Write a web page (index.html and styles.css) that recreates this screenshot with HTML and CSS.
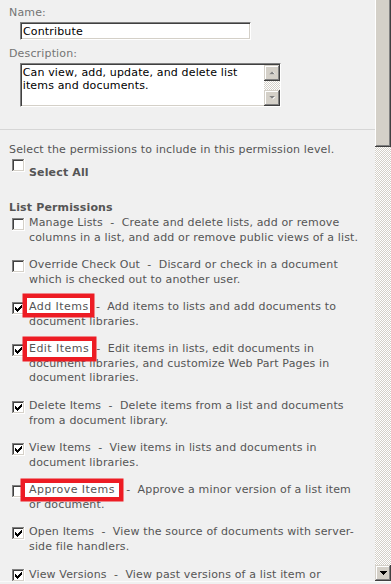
FILE: index.html
```html
<!DOCTYPE html>
<html lang="en">
<head>
<meta charset="utf-8">
<title>Permission Level</title>
<link rel="stylesheet" href="styles.css">
</head>
<body>
<svg class="defs" width="0" height="0" aria-hidden="true">
  <defs>
    <g id="cb-box">
      <path fill="#808080" d="M0 0h12v1H1v11H0z"/>
      <path fill="#ffffff" d="M12 0h1v13H0v-1h12z"/>
      <path fill="#404040" d="M1 1h10v1H2v9H1z"/>
      <path fill="#d4d0c8" d="M11 1h1v11H1v-1h10z"/>
      <rect x="2" y="2" width="9" height="9" fill="#ffffff"/>
    </g>
    <path id="cb-check" fill="#000" d="M9 3h1v1H9z M8 4h2v1H8z M3 5h1v1H3z M7 5h3v1H7z M3 6h2v1H3z M6 6h3v1H6z M3 7h5v1H3z M4 8h3v1H4z M5 9h1v1H5z"/>
  </defs>
</svg>

<div class="frame">
  <main class="content">
    <section class="top">
      <div class="label">Name:</div>
      <input class="field" type="text" value="Contribute">
      <div class="label label-desc">Description:</div>
      <div class="memo">
        <div class="memo-text">Can view, add, update, and delete list items and documents.</div>
        <div class="memo-scroll">
          <div class="sbtn"><svg class="arrow" width="7" height="4" viewBox="0 0 8 5"><path fill="#fff" d="M1 4h7L4.5 0.5z"/><path fill="#808080" d="M0 4h7L3.5 0.5z"/></svg></div>
          <div class="strack"></div>
          <div class="sbtn"><svg class="arrow" width="7" height="4" viewBox="0 0 8 5"><path fill="#fff" d="M1 1h7L4.5 4.5z"/><path fill="#808080" d="M0 0h7L3.5 3.5z"/></svg></div>
        </div>
      </div>
    </section>

    <section class="perms">
      <p class="intro">Select the permissions to include in this permission level.</p>
      <div class="selectall">
        <svg class="cb" viewBox="0 0 13 13"><use href="#cb-box"/></svg>
        <span class="selectall-text">Select All</span>
      </div>
      <h3 class="group-title">List Permissions</h3>
      <ul class="items">
        <li class="item">
          <svg class="cb" viewBox="0 0 13 13"><use href="#cb-box"/></svg>
          <span class="item-text">Manage Lists&nbsp;&nbsp;-&nbsp;&nbsp;Create and delete lists, add or remove columns in a list, and add or remove public views of a list.</span>
        </li>
        <li class="item">
          <svg class="cb" viewBox="0 0 13 13"><use href="#cb-box"/></svg>
          <span class="item-text">Override Check Out&nbsp;&nbsp;-&nbsp;&nbsp;Discard or check in a document which is checked out to another user.</span>
        </li>
        <li class="item">
          <svg class="cb" viewBox="0 0 13 13"><use href="#cb-box"/><use href="#cb-check"/></svg>
          <span class="item-text"><span class="mark mark-add">Add Items</span>&nbsp;&nbsp;-&nbsp;&nbsp;Add items to lists and add documents to document libraries.</span>
        </li>
        <li class="item">
          <svg class="cb" viewBox="0 0 13 13"><use href="#cb-box"/><use href="#cb-check"/></svg>
          <span class="item-text"><span class="mark mark-edit">Edit Items</span>&nbsp;&nbsp;-&nbsp;&nbsp;Edit items in lists, edit documents in document libraries, and customize Web Part Pages in document libraries.</span>
        </li>
        <li class="item">
          <svg class="cb" viewBox="0 0 13 13"><use href="#cb-box"/><use href="#cb-check"/></svg>
          <span class="item-text">Delete Items&nbsp;&nbsp;-&nbsp;&nbsp;Delete items from a list and documents from a document library.</span>
        </li>
        <li class="item">
          <svg class="cb" viewBox="0 0 13 13"><use href="#cb-box"/><use href="#cb-check"/></svg>
          <span class="item-text">View Items&nbsp;&nbsp;-&nbsp;&nbsp;View items in lists and documents in document libraries.</span>
        </li>
        <li class="item">
          <svg class="cb" viewBox="0 0 13 13"><use href="#cb-box"/></svg>
          <span class="item-text"><span class="mark mark-approve">Approve Items</span>&nbsp;&nbsp;-&nbsp;&nbsp;Approve a minor version of a list item or document.</span>
        </li>
        <li class="item">
          <svg class="cb" viewBox="0 0 13 13"><use href="#cb-box"/><use href="#cb-check"/></svg>
          <span class="item-text">Open Items&nbsp;&nbsp;-&nbsp;&nbsp;View the source of documents with server-side file handlers.</span>
        </li>
        <li class="item">
          <svg class="cb" viewBox="0 0 13 13"><use href="#cb-box"/><use href="#cb-check"/></svg>
          <span class="item-text">View Versions&nbsp;&nbsp;-&nbsp;&nbsp;View past versions of a list item or document.</span>
        </li>
      </ul>
    </section>
  </main>

  <div class="vscroll">
    <div class="thumb"></div>
    <div class="track"></div>
    <div class="sbtn sbtn-main"><svg class="arrow" width="7" height="4" viewBox="0 0 7 4"><path fill="#000" d="M0 0h7v1H6v1H5v1H4v1H3V3H2V2H1V1H0z"/></svg></div>
  </div>
</div>
</body>
</html>
```

FILE: styles.css
```css
* {
  box-sizing: border-box;
}

html, body {
  margin: 0;
  background: #f0f0f0;
}

body {
  font-family: "DejaVu Sans", Verdana, sans-serif;
  font-size: 11px;
  line-height: 14.5px;
  letter-spacing: 0.15px;
  color: #555555;
  overflow: hidden;
}

.defs {
  position: absolute;
  width: 0;
  height: 0;
}

.frame {
  display: flex;
  height: 582px;
  border-bottom: 1px solid #fafafa;
  box-shadow: 0 1px #9a9a9a;
  overflow: hidden;
}

.content {
  width: 375px;
  flex: none;
}

/* ---------- top: name / description ---------- */
.top {
  height: 130px;
  padding: 6px 9px 0;
  border-bottom: 1px solid #d6d6d6;
}

.label {
  color: #747474;
}

.label-desc {
  margin-top: 6.75px;
}

.field {
  display: block;
  margin: 1.5px 0 0 11px;
  width: 231px;
  height: 18px;
  padding: 0 0 0 2px;
  font: inherit;
  letter-spacing: inherit;
  color: #000;
  background: #fff;
  border: 1px solid;
  border-color: #808080 #ffffff #ffffff #808080;
  box-shadow: inset 1px 1px #404040, inset -1px -1px #d4d0c8;
  outline: none;
}

.memo {
  display: flex;
  margin: 1.75px 0 0 11px;
  width: 261px;
  height: 44px;
  background: #fff;
  border: 1px solid;
  border-color: #808080 #ffffff #ffffff #808080;
  box-shadow: inset 1px 1px #404040, inset -1px -1px #d4d0c8;
}

.memo-text {
  flex: 1;
  min-width: 0;
  padding: 2px 0 0 1.7px;
  color: #000;
  line-height: 13.3px;
}

.memo-scroll {
  width: 16px;
  flex: none;
  display: flex;
  flex-direction: column;
  margin-top: 1px;
}

.sbtn {
  width: 16px;
  height: 16px;
  flex: none;
  display: flex;
  align-items: center;
  justify-content: center;
  background: #d4d0c8;
  box-shadow: inset -1px -1px #404040, inset 1px 1px #d4d0c8,
              inset -2px -2px #808080, inset 2px 2px #ffffff;
}

.arrow {
  display: block;
}

.strack,
.track {
  flex: 1;
  background: repeating-conic-gradient(#d4d0c8 0 25%, #ffffff 0 50%) 0 0 / 2px 2px;
}

/* ---------- permissions ---------- */
.perms {
  padding: 12.75px 11px 0 9px;
}

.intro {
  margin: 0;
}

.selectall {
  display: flex;
  margin-top: 2px;
}

.cb {
  flex: none;
  width: 13px;
  height: 13px;
  shape-rendering: crispEdges;
}

.selectall .cb {
  margin: 0 4px 0 3px;
}

.selectall-text {
  padding-top: 6.75px;
  font-weight: bold;
}

.group-title {
  margin: 20px 0 0;
  font-size: 11px;
  font-weight: bold;
  line-height: 14.5px;
}

.items {
  list-style: none;
  margin: 1px 0 0;
  padding: 0;
}

.item {
  display: flex;
  margin-bottom: 13.15px;
}

.item .cb {
  margin: 1.5px 4px 0 3px;
}

.item-text {
  flex: 1;
  min-width: 0;
}

/* red annotation boxes */
.mark {
  position: relative;
  background: #ffffff;
  letter-spacing: 0.45px;
  box-shadow: 0 0 0 4.5px #ed1c24;
}

.mark-add {
  padding: 2.45px 1.8px 0.15px 2.5px;
  margin: 0 -1.8px 0 -2.5px;
}

.mark-edit {
  padding: 1.35px 3.2px 1.85px 2.5px;
  margin: 0 -3.2px 0 -2.5px;
}

.mark-approve {
  padding: 0 4.5px 0.35px 3.8px;
  margin: 0 -0.5px 0 -3.8px;
}

/* ---------- window scrollbar ---------- */
.vscroll {
  width: 16px;
  flex: none;
  display: flex;
  flex-direction: column;
}

.thumb {
  height: 147px;
  flex: none;
  background: #d4d0c8;
  box-shadow: inset -1px -1px #404040, inset 1px 0 #ffffff, inset -2px -2px #808080;
}
```
